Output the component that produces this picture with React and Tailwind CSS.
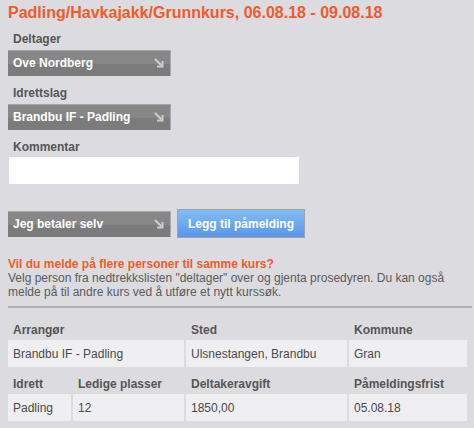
import React from "react";

function Arrow() {
  return (
    <svg width="10" height="10" viewBox="0 0 10 10" className="shrink-0">
      <path d="M1 1 L7.5 7.5" stroke="#cdcdcd" strokeWidth="2" fill="none" />
      <path d="M8.5 3 V8.5 H3" stroke="#cdcdcd" strokeWidth="2" fill="none" />
    </svg>
  );
}

function Select({ label }) {
  return (
    <div className="flex h-[26px] w-[163px] items-center justify-between border-r border-[#a8a8a8] bg-[linear-gradient(to_bottom,#a6a6a6_0px,#a6a6a6_1px,#878787_1px,#878787_55%,#7b7b7b_55%,#7b7b7b_100%)] pl-[5px] pr-[6px]">
      <span className="text-[12px] font-bold leading-[14px] text-white">{label}</span>
      <Arrow />
    </div>
  );
}

function Label({ children, className = "" }) {
  return (
    <div className={"pl-[5px] text-[12px] font-bold leading-[14px] text-[#555] " + className}>
      {children}
    </div>
  );
}

function Head({ children, className = "" }) {
  return (
    <div className={"flex h-[23px] items-end px-[5px] pb-[1px] text-[12px] font-bold leading-[14px] text-[#555] " + className}>
      {children}
    </div>
  );
}

function Cell({ children, className = "" }) {
  return (
    <div className={"flex h-[27px] items-center bg-[#efeff1] px-[5px] text-[12px] leading-[14px] text-[#4a4a4a] " + className}>
      {children}
    </div>
  );
}

export default function App() {
  return (
    <div
      className="min-h-[428px] w-[474px] bg-[#dcdce0] pl-[8px] pr-[2px]"
      style={{ fontFamily: '"Liberation Sans", Arial, sans-serif' }}
    >
      <div className="pt-[3px] text-[16px] font-bold leading-[20px] text-[#ef5b2a]">
        Padling/Havkajakk/Grunnkurs, 06.08.18 - 09.08.18
      </div>

      <Label className="mt-[9px]">Deltager</Label>
      <div className="mt-[4px]">
        <Select label="Ove Nordberg" />
      </div>

      <Label className="mt-[10px]">Idrettslag</Label>
      <div className="mt-[4px]">
        <Select label="Brandbu IF - Padling" />
      </div>

      <Label className="mt-[10px]">Kommentar</Label>
      <div className="ml-[1px] mt-[3px] h-[27px] w-[290px] bg-white" />

      <div className="mt-[25px] flex items-start gap-[6px]">
        <div className="mt-[2px]">
          <Select label="Jeg betaler selv" />
        </div>
        <button className="flex h-[29px] w-[128px] items-center justify-center border border-[#a2a2a2] bg-[linear-gradient(to_bottom,#82bdf7,#5896ea)] text-[12px] font-bold leading-[14px] text-white">
          Legg til påmelding
        </button>
      </div>

      <div className="mt-[19px] text-[12px] leading-[14px]">
        <div className="font-bold text-[#ef5b2a]">Vil du melde på flere personer til samme kurs?</div>
        <div className="text-[#5a5a5a]">
          Velg person fra nedtrekkslisten "deltager" over og gjenta prosedyren. Du kan også melde på til andre
          kurs ved å utføre et nytt kurssøk.
        </div>
      </div>

      <div className="mt-[7px] h-[2px] w-[464px] bg-[#b0b0b0]" />

      <div className="mt-[7px] grid w-[459px] grid-cols-[63px_111px_161px_118px] gap-[2px]">
        <Head className="col-span-2">Arrangør</Head>
        <Head>Sted</Head>
        <Head>Kommune</Head>
        <Cell className="col-span-2">Brandbu IF - Padling</Cell>
        <Cell>Ulsnestangen, Brandbu</Cell>
        <Cell>Gran</Cell>
        <Head>Idrett</Head>
        <Head>Ledige plasser</Head>
        <Head>Deltakeravgift</Head>
        <Head>Påmeldingsfrist</Head>
        <Cell>Padling</Cell>
        <Cell>12</Cell>
        <Cell>1850,00</Cell>
        <Cell>05.08.18</Cell>
      </div>
    </div>
  );
}
